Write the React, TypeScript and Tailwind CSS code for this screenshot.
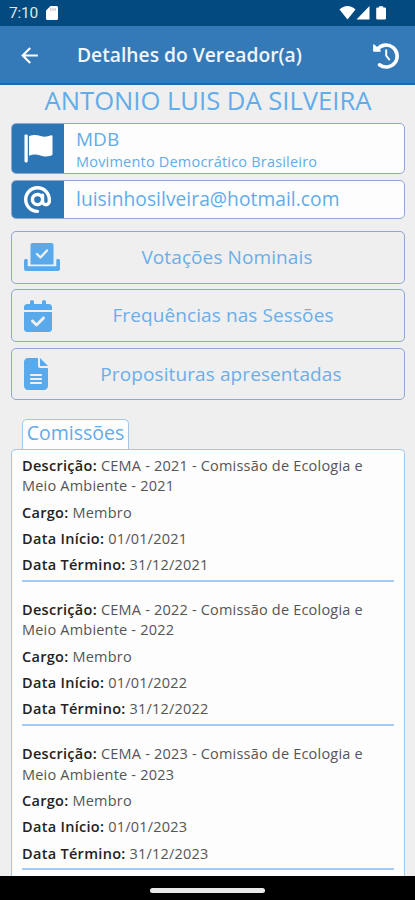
import React from "react"
import { FaAt, FaCalendarCheck, FaFileLines } from "react-icons/fa6"
import { MdArrowBack } from "react-icons/md"

// --- Types ---
type Comissao = { descricao: string; cargo: string; inicio: string; termino: string };

const comissoes: Comissao[] = [2021, 2022, 2023].map((ano) => ({
  descricao: `CEMA - ${ano} - Comissão de Ecologia e Meio Ambiente - ${ano}`,
  cargo: "Membro",
  inicio: `01/01/${ano}`,
  termino: `31/12/${ano}`,
}));

const HistoryIcon = () => (
  <svg className="ml-auto w-[28px] h-[28px]" viewBox="0 0 28 28" fill="none" stroke="white" strokeLinecap="round" strokeLinejoin="round">
    <path d="M5.500 7.300A11 11 0 1 1 7.500 22.800" strokeWidth="3.600" />
    <path d="M2 3.300V8.800H8Z" fill="white" strokeWidth="1.800" />
    <path d="M14.200 8.300V13.700L17.200 17.500" strokeWidth="2" />
  </svg>
);

const FlagIcon = () => (
  <svg className="w-[29px] h-[29px]" viewBox="0 0 30 30" fill="white">
    <rect x="0.5" y="0.5" width="3.4" height="29" rx="1.2" />
    <path d="M5.2 2.2C10 .6 13.5.9 17 2s7 1 11.200-.6Q29.500 1.200 29.500 2.200V21Q29.500 21.800 28.500 22.200C24 23.500 20.500 23.500 17 22.300S9.500 20.800 5.200 22.500Z" />
  </svg>
);

const BallotIcon = () => (
  <svg className="w-[36px] h-[28px]" viewBox="0 0 36 28" fill="#5aa9ea">
    <path d="M8.500 0h19A2 2 0 0 1 29.500 2v19.500h-23V2A2 2 0 0 1 8.500 0Z" />
    <path d="M1.500 16H2.500A1.200 1.200 0 0 1 3.700 17.200V23.200H32.300V17.200A1.200 1.200 0 0 1 33.500 16H34.500A1.500 1.500 0 0 1 36 17.500V26A2 2 0 0 1 34 28H2A2 2 0 0 1 0 26V17.500A1.500 1.500 0 0 1 1.500 16Z" />
    <path d="m13 11 3.500 3.500L23 7.500" fill="none" stroke="#efefef" strokeWidth="2.400" strokeLinecap="round" strokeLinejoin="round" />
  </svg>
);

const StatusBar = () => (
  <div className="h-[26px] shrink-0 bg-[#034a80] flex items-center justify-between pl-[9px] pr-[28px]">
    <div className="flex items-center gap-[8px]">
      <span className="pt-[2px] font-[Roboto,sans-serif] text-[15.500px] tracking-[-0.2px] leading-none text-[#dfe6ee]">7:10</span>
      <svg className="w-[12px] h-[14px]" viewBox="0 0 12 14">
        <path d="M4.500 0H10.500A1.500 1.500 0 0 1 12 1.500V12.500A1.500 1.500 0 0 1 10.500 14H1.500A1.500 1.500 0 0 1 0 12.500V4.500Z" fill="white" />
        <path d="M4.800 2.200v2.500M7 2.200v2.500M9.200 2.200v2.500" stroke="#b9a9ae" strokeWidth="1" />
      </svg>
    </div>
    <svg className="w-[48px] h-[16px]" viewBox="0 0 48 16" fill="white">
      <path d="M0.500 4.500C5-.3 12-.3 16.500 4.500L8.500 14.500Z" />
      <path d="M30.500 1V14.500H17.500Z" />
      <path d="M40 1.200h4.200v1.300h1.600a1.200 1.200 0 0 1 1.200 1.200v9.600a1.200 1.200 0 0 1-1.200 1.200h-7.400a1.200 1.200 0 0 1-1.200-1.200V3.700a1.200 1.200 0 0 1 1.200-1.200H40Z" />
    </svg>
  </div>
);

const ActionButton = ({ icon, label }: { icon: React.ReactNode; label: string }) => (
  <button className="h-[52.600px] w-full rounded-[5px] border-[1.5px] border-[#8fa8d0] flex items-center pl-[12px] pr-[10px] text-[19px] tracking-[0.1px] text-[#6aaeea]">
    <span className="shrink-0 text-[#5aa9ea]">{icon}</span>
    <span className="flex-1 text-center">{label}</span>
  </button>
);

const Campo = ({ label, value }: { label: string; value: string }) => (
  <p className="leading-[20.300px] mb-[6px]">
    <span className="font-semibold tracking-[0.3px] text-[#222]">{label}:</span> {value}
  </p>
);

export default function DetalhesVereador() {
  return (
    <div className="h-[900px] w-full bg-[#efefef] flex flex-col overflow-hidden font-['Open_Sans','Noto_Sans',sans-serif]">
      <StatusBar />

      {/* Header */}
      <header className="h-[59px] shrink-0 bg-[#347ab8] border-b-2 border-[#1f69ab] flex items-center pt-[2px] pl-[17px] pr-[15px]">
        <MdArrowBack className="text-white" size={25} />
        <h1 className="ml-[35px] text-[19.250px] font-semibold text-[#f0f5fa] whitespace-nowrap">Detalhes do Vereador(a)</h1>
        <HistoryIcon />
      </header>

      <main className="flex-1 min-h-0 pl-[11px] pr-[10px] flex flex-col">
        <h2 className="h-[38px] shrink-0 text-center text-[25.600px] leading-[32px] text-[#62acea] whitespace-nowrap">ANTONIO LUIS DA SILVEIRA</h2>

        {/* Partido e contato */}
        <div className="h-[51px] shrink-0 flex rounded-[5px] border-[1.5px] border-[#8fa8d0] bg-[#fdfdfd] overflow-hidden">
          <div className="w-[52px] shrink-0 bg-[#2d76b5] flex items-center justify-center"><FlagIcon /></div>
          <div className="pl-[12px] text-[#62acea]">
            <div className="text-[19px] leading-[30px] font-medium">MDB</div>
            <div className="text-[14.500px] tracking-[0.200px] leading-[16px]">Movimento Democrático Brasileiro</div>
          </div>
        </div>
        <div className="mt-[6px] h-[39px] shrink-0 flex rounded-[5px] border-[1.5px] border-[#8fa8d0] bg-[#fdfdfd] overflow-hidden">
          <div className="w-[52px] shrink-0 pr-[1px] bg-[#2d76b5] flex items-center justify-center"><FaAt className="text-white" size={27} /></div>
          <div className="pl-[12px] text-[19.200px] tracking-[0.050px] leading-[36px] text-[#62acea]">luisinhosilveira@hotmail.com</div>
        </div>

        <div className="mt-[12px] shrink-0 flex flex-col gap-[5.800px]">
          <ActionButton icon={<BallotIcon />} label="Votações Nominais" />
          <ActionButton icon={<FaCalendarCheck className="w-[28px] h-[32px]" />} label="Frequências nas Sessões" />
          <ActionButton icon={<FaFileLines className="w-[24px] h-[32px]" />} label="Proposituras apresentadas" />
        </div>

        {/* Comissões */}
        <div className="mt-[18.600px] ml-[11px] w-[107px] h-[30px] shrink-0 rounded-t-[5px] border border-b-0 border-[#9fc8ee] bg-[#fdfdfd] text-center text-[19.500px] leading-[26px] text-[#62acea]">Comissões</div>
        <div className="flex-1 min-h-0 rounded-t-[5px] border border-b-0 border-[#9fc8ee] bg-[#fdfdfd] px-[10px] pt-[6px] text-[14.500px] tracking-[0.200px] text-[#555] overflow-hidden">
          {comissoes.map((c) => (
            <div key={c.inicio} className="h-[126px] mb-[18.200px] border-b-2 border-b-[#a3cbf0]">
              <Campo label="Descrição" value={c.descricao} />
              <Campo label="Cargo" value={c.cargo} />
              <Campo label="Data Início" value={c.inicio} />
              <Campo label="Data Término" value={c.termino} />
            </div>
          ))}
        </div>
      </main>

      {/* Navigation bar */}
      <footer className="h-[24px] shrink-0 bg-black flex items-center justify-center">
        <div className="mt-[4px] w-[115px] h-[5px] rounded-full bg-[#e8e8e8]" />
      </footer>
    </div>
  );
}
